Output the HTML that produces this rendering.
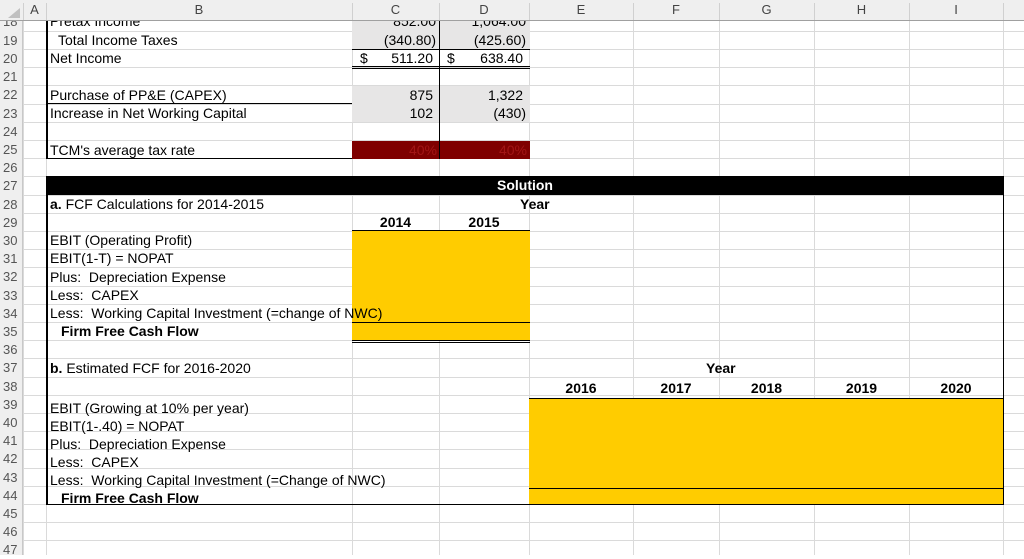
<!DOCTYPE html>
<html><head><meta charset="utf-8"><style>
*{margin:0;padding:0;box-sizing:border-box}
body{width:1024px;height:555px;overflow:hidden;background:#fff;position:relative;font-family:"Liberation Sans",Arial,sans-serif;font-size:14px;color:#000}
.a{position:absolute}
.t{position:absolute;height:18px;line-height:19px;white-space:nowrap}
.b{font-weight:bold}
.r{text-align:right}
.c{text-align:center}
.vl{position:absolute;top:21px;bottom:0;width:1px;background:#dadada}
.hl{position:absolute;left:23px;right:0;height:1px;background:#dadada}
.rn{position:absolute;left:0;width:23px;height:18px;line-height:19px;color:#555;font-size:13px;padding-left:3px}
.ch{position:absolute;top:0;height:20px;line-height:20px;text-align:center;color:#444;font-size:13px}
</style></head><body>
<div class="hl" style="top:31px"></div><div class="hl" style="top:49px"></div><div class="hl" style="top:67px"></div><div class="hl" style="top:85px"></div><div class="hl" style="top:104px"></div><div class="hl" style="top:122px"></div><div class="hl" style="top:140px"></div><div class="hl" style="top:158px"></div><div class="hl" style="top:176px"></div><div class="hl" style="top:195px"></div><div class="hl" style="top:213px"></div><div class="hl" style="top:231px"></div><div class="hl" style="top:249px"></div><div class="hl" style="top:267px"></div><div class="hl" style="top:286px"></div><div class="hl" style="top:304px"></div><div class="hl" style="top:322px"></div><div class="hl" style="top:340px"></div><div class="hl" style="top:358px"></div><div class="hl" style="top:377px"></div><div class="hl" style="top:395px"></div><div class="hl" style="top:413px"></div><div class="hl" style="top:431px"></div><div class="hl" style="top:449px"></div><div class="hl" style="top:468px"></div><div class="hl" style="top:486px"></div><div class="hl" style="top:504px"></div><div class="hl" style="top:522px"></div><div class="hl" style="top:540px"></div>
<div class="vl" style="left:23px"></div><div class="vl" style="left:46px"></div><div class="vl" style="left:352px"></div><div class="vl" style="left:439px"></div><div class="vl" style="left:529px"></div><div class="vl" style="left:633px"></div><div class="vl" style="left:719px"></div><div class="vl" style="left:814px"></div><div class="vl" style="left:909px"></div><div class="vl" style="left:1003px"></div>

<div class="a" style="left:352px;top:21px;width:178px;height:28px;background:#e7e6e6"></div>
<div class="a" style="left:352px;top:86px;width:178px;height:36px;background:#e7e6e6"></div>
<div class="a" style="left:352px;top:141px;width:178px;height:18px;background:#7f0000"></div>
<div class="a" style="left:352px;top:231px;width:178px;height:110px;background:#ffcc00"></div>
<div class="a" style="left:529px;top:398px;width:475px;height:107px;background:#ffcc00"></div>
<div class="a" style="left:46px;top:176px;width:958px;height:19px;background:#000"></div>

<div class="a" style="left:46px;top:21px;width:2px;height:138px;background:#000"></div>
<div class="a" style="left:46px;top:158px;width:306px;height:1px;background:#000"></div>
<div class="a" style="left:46px;top:103px;width:306px;height:1px;background:#000"></div>
<div class="a" style="left:439px;top:21px;width:1px;height:138px;background:#000"></div>
<div class="a" style="left:352px;top:49px;width:178px;height:1px;background:#000"></div>
<div class="a" style="left:352px;top:66px;width:178px;height:1px;background:#000"></div>
<div class="a" style="left:352px;top:68px;width:178px;height:1px;background:#000"></div>
<div class="a" style="left:46px;top:176px;width:2px;height:329px;background:#000"></div>
<div class="a" style="left:1003px;top:176px;width:1px;height:329px;background:#000"></div>
<div class="a" style="left:46px;top:504px;width:958px;height:1px;background:#000"></div>
<div class="a" style="left:352px;top:230px;width:178px;height:1px;background:#000"></div>
<div class="a" style="left:352px;top:322px;width:178px;height:1px;background:#000"></div>
<div class="a" style="left:352px;top:340px;width:178px;height:1px;background:#000"></div>
<div class="a" style="left:352px;top:342px;width:178px;height:1px;background:#000"></div>
<div class="a" style="left:529px;top:398px;width:475px;height:1px;background:#000"></div>
<div class="a" style="left:529px;top:488px;width:475px;height:1px;background:#000"></div>

<div class="a" style="left:0;top:0;width:1024px;height:21px;background:#efefef;border-bottom:1px solid #a0a0a0"></div>
<div class="a" style="left:0;top:21px;width:23px;height:534px;background:#efefef;border-right:1px solid #c8c8c8"></div>
<div class="a" style="left:8px;top:8px;width:0;height:0;border-left:12px solid transparent;border-bottom:10px solid #c0c0c0"></div>
<div class="ch" style="left:23px;width:23px">A</div><div class="ch" style="left:46px;width:306px">B</div><div class="ch" style="left:352px;width:87px">C</div><div class="ch" style="left:439px;width:90px">D</div><div class="ch" style="left:529px;width:104px">E</div><div class="ch" style="left:633px;width:86px">F</div><div class="ch" style="left:719px;width:95px">G</div><div class="ch" style="left:814px;width:95px">H</div><div class="ch" style="left:909px;width:94px">I</div>
<div class="a" style="left:23px;top:3px;width:1px;height:17px;background:#d0d0d0"></div><div class="a" style="left:46px;top:3px;width:1px;height:17px;background:#d0d0d0"></div><div class="a" style="left:352px;top:3px;width:1px;height:17px;background:#d0d0d0"></div><div class="a" style="left:439px;top:3px;width:1px;height:17px;background:#d0d0d0"></div><div class="a" style="left:529px;top:3px;width:1px;height:17px;background:#d0d0d0"></div><div class="a" style="left:633px;top:3px;width:1px;height:17px;background:#d0d0d0"></div><div class="a" style="left:719px;top:3px;width:1px;height:17px;background:#d0d0d0"></div><div class="a" style="left:814px;top:3px;width:1px;height:17px;background:#d0d0d0"></div><div class="a" style="left:909px;top:3px;width:1px;height:17px;background:#d0d0d0"></div><div class="a" style="left:1003px;top:3px;width:1px;height:17px;background:#d0d0d0"></div>

<div class="rn" style="top:31px">19</div><div class="rn" style="top:49px">20</div><div class="rn" style="top:67px">21</div><div class="rn" style="top:85px">22</div><div class="rn" style="top:104px">23</div><div class="rn" style="top:122px">24</div><div class="rn" style="top:140px">25</div><div class="rn" style="top:158px">26</div><div class="rn" style="top:176px">27</div><div class="rn" style="top:195px">28</div><div class="rn" style="top:213px">29</div><div class="rn" style="top:231px">30</div><div class="rn" style="top:249px">31</div><div class="rn" style="top:267px">32</div><div class="rn" style="top:286px">33</div><div class="rn" style="top:304px">34</div><div class="rn" style="top:322px">35</div><div class="rn" style="top:340px">36</div><div class="rn" style="top:358px">37</div><div class="rn" style="top:377px">38</div><div class="rn" style="top:395px">39</div><div class="rn" style="top:413px">40</div><div class="rn" style="top:431px">41</div><div class="rn" style="top:449px">42</div><div class="rn" style="top:468px">43</div><div class="rn" style="top:486px">44</div><div class="rn" style="top:504px">45</div><div class="rn" style="top:522px">46</div><div class="rn" style="top:540px">47</div>

<div class="a" style="left:0;top:21px;width:1024px;height:10px;overflow:hidden">
 <div class="t" style="left:3px;top:-9px;color:#555;font-size:13px">18</div>
 <div class="t" style="left:50px;top:-9px">Pretax Income</div>
 <div class="t r" style="left:352px;top:-9px;width:84px">852.00</div>
 <div class="t r" style="left:439px;top:-9px;width:87px">1,064.00</div>
</div>
<div class="t" style="left:58px;top:31px">Total Income Taxes</div>
<div class="t r" style="left:352px;top:31px;width:84px">(340.80)</div>
<div class="t r" style="left:439px;top:31px;width:87px">(425.60)</div>
<div class="t" style="left:50px;top:49px">Net Income</div>
<div class="t" style="left:360px;top:49px">$</div><div class="t r" style="left:352px;top:49px;width:81px">511.20</div>
<div class="t" style="left:447px;top:49px">$</div><div class="t r" style="left:439px;top:49px;width:84px">638.40</div>
<div class="t" style="left:50px;top:86px">Purchase of PP&amp;E (CAPEX)</div>
<div class="t r" style="left:352px;top:86px;width:81px">875</div>
<div class="t r" style="left:439px;top:86px;width:84px">1,322</div>
<div class="t" style="left:50px;top:104px">Increase in Net Working Capital</div>
<div class="t r" style="left:352px;top:104px;width:81px">102</div>
<div class="t r" style="left:439px;top:104px;width:87px">(430)</div>
<div class="t" style="left:50px;top:141px">TCM's average tax rate</div>
<div class="t r" style="left:352px;top:141px;width:85px;color:#a31515">40%</div>
<div class="t r" style="left:439px;top:141px;width:88px;color:#a31515">40%</div>

<div class="t b" style="left:497px;top:176px;color:#fff">Solution</div>
<div class="t b" style="left:520px;top:195px">Year</div>
<div class="t" style="left:50px;top:195px"><b>a.</b> FCF Calculations for 2014-2015</div>
<div class="t b c" style="left:352px;top:213px;width:87px">2014</div>
<div class="t b c" style="left:439px;top:213px;width:90px">2015</div>
<div class="t" style="left:50px;top:231px">EBIT (Operating Profit)</div>
<div class="t" style="left:50px;top:249px">EBIT(1-T) = NOPAT</div>
<div class="t" style="left:50px;top:268px">Plus:&nbsp; Depreciation Expense</div>
<div class="t" style="left:50px;top:286px">Less:&nbsp; CAPEX</div>
<div class="t" style="left:50px;top:304px">Less:&nbsp; Working Capital Investment (=change of NWC)</div>
<div class="t b" style="left:61px;top:322px">Firm Free Cash Flow</div>

<div class="t" style="left:50px;top:359px"><b>b.</b> Estimated FCF for 2016-2020</div>
<div class="t b" style="left:706px;top:359px">Year</div>
<div class="t b c" style="left:529px;top:379px;width:104px">2016</div>
<div class="t b c" style="left:633px;top:379px;width:86px">2017</div>
<div class="t b c" style="left:719px;top:379px;width:95px">2018</div>
<div class="t b c" style="left:814px;top:379px;width:95px">2019</div>
<div class="t b c" style="left:909px;top:379px;width:94px">2020</div>
<div class="t" style="left:50px;top:399px">EBIT (Growing at 10% per year)</div>
<div class="t" style="left:50px;top:417px">EBIT(1-.40) = NOPAT</div>
<div class="t" style="left:50px;top:435px">Plus:&nbsp; Depreciation Expense</div>
<div class="t" style="left:50px;top:453px">Less:&nbsp; CAPEX</div>
<div class="t" style="left:50px;top:471px">Less:&nbsp; Working Capital Investment (=Change of NWC)</div>
<div class="t b" style="left:61px;top:489px">Firm Free Cash Flow</div>
</body></html>
